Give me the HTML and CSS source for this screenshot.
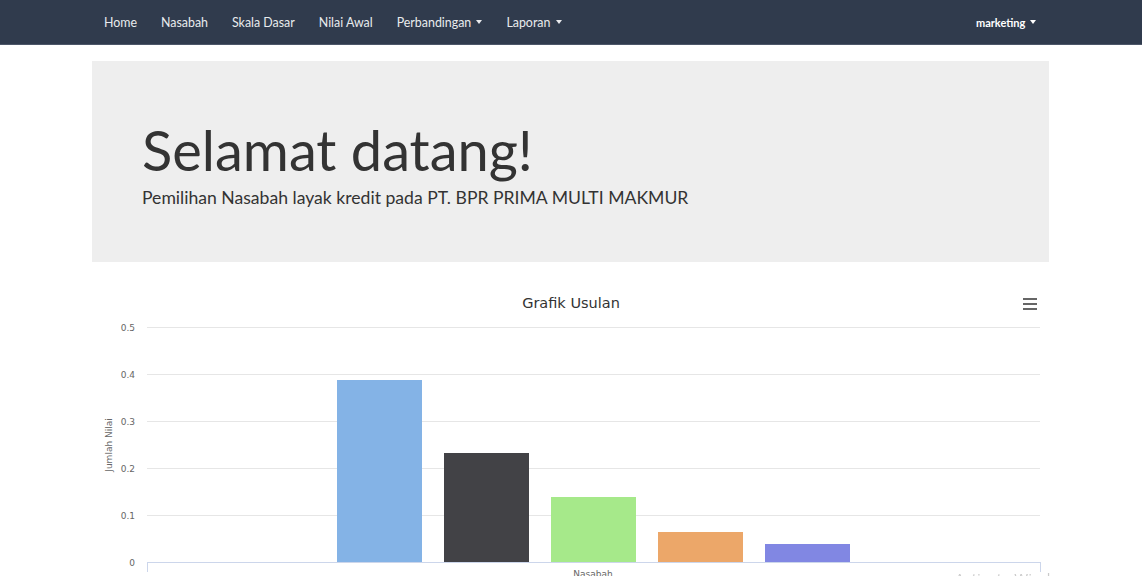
FILE: index.html
```html
<!DOCTYPE html>
<html lang="id">
<head>
<meta charset="utf-8">
<title>Selamat datang</title>
<link rel="stylesheet" href="styles.css">
</head>
<body>
<nav class="navbar">
  <div class="container nav-inner">
    <ul class="nav">
      <li><a href="#">Home</a></li>
      <li><a href="#">Nasabah</a></li>
      <li><a href="#">Skala Dasar</a></li>
      <li><a href="#">Nilai Awal</a></li>
      <li><a href="#">Perbandingan <span class="caret"></span></a></li>
      <li><a href="#">Laporan <span class="caret"></span></a></li>
    </ul>
    <ul class="nav nav-right">
      <li><a href="#" class="bold">marketing <span class="caret"></span></a></li>
    </ul>
  </div>
</nav>

<main class="container">
  <section class="jumbotron">
    <h1>Selamat datang!</h1>
    <p>Pemilihan Nasabah layak kredit pada PT. BPR PRIMA MULTI MAKMUR</p>
  </section>

  <div class="chart">
    <svg width="957" height="300" viewBox="0 0 957 300" xmlns="http://www.w3.org/2000/svg">
      <text x="479" y="26" class="c-title" text-anchor="middle">Grafik Usulan</text>
      <g class="menu-icon">
        <rect x="931" y="16" width="14" height="2"/>
        <rect x="931" y="21" width="14" height="2"/>
        <rect x="931" y="26" width="14" height="2"/>
      </g>
      <g class="grid">
        <line x1="55" y1="45.5" x2="948" y2="45.5"/>
        <line x1="55" y1="92.5" x2="948" y2="92.5"/>
        <line x1="55" y1="139.5" x2="948" y2="139.5"/>
        <line x1="55" y1="186.5" x2="948" y2="186.5"/>
        <line x1="55" y1="233.5" x2="948" y2="233.5"/>
      </g>
      <g class="ylabels" text-anchor="end">
        <text x="43" y="49">0.5</text>
        <text x="43" y="96">0.4</text>
        <text x="43" y="143">0.3</text>
        <text x="43" y="190">0.2</text>
        <text x="43" y="237">0.1</text>
        <text x="43" y="284">0</text>
      </g>
      <text class="ytitle" transform="translate(20 163) rotate(-90)" text-anchor="middle">Jumlah Nilai</text>
      <rect x="245" y="98" width="85" height="182" fill="#84b3e6"/>
      <rect x="352" y="171" width="85" height="109" fill="#424246"/>
      <rect x="459" y="215" width="85" height="65" fill="#a6e98a"/>
      <rect x="566" y="250" width="85" height="30" fill="#eca769"/>
      <rect x="673" y="262" width="85" height="18" fill="#8187e3"/>
      <g class="axis">
        <line x1="55" y1="280.5" x2="948" y2="280.5"/>
        <line x1="55.5" y1="280" x2="55.5" y2="290"/>
        <line x1="948.5" y1="280" x2="948.5" y2="290"/>
      </g>
      <text x="501" y="295" class="xtitle" text-anchor="middle">Nasabah</text>
    </svg>
  </div>
</main>

<div class="watermark">Activate Windows</div>
</body>
</html>
```

FILE: styles.css
```css
* { box-sizing: border-box; }

html, body {
  margin: 0;
  padding: 0;
  background: #ffffff;
  overflow: hidden;
}

body {
  font-family: Lato, "Open Sans", "Liberation Sans", sans-serif;
  color: #333333;
}

.container {
  width: 957px;
  margin-left: calc(50% - 479px);
}

.navbar {
  height: 45px;
  background: #303b4d;
  border-bottom: 1px solid #4d5769;
}

.nav-inner {
  display: flex;
  justify-content: space-between;
  align-items: center;
  height: 44px;
}

.nav {
  list-style: none;
  margin: 0;
  padding: 0;
  display: flex;
}

.nav a {
  display: flex;
  align-items: center;
  height: 44px;
  padding: 0 12px;
  color: #e9ebee;
  text-decoration: none;
  font-size: 12.4px;
  white-space: pre;
}

.nav a.bold {
  font-weight: 700;
  color: #ffffff;
  font-size: 11px;
  padding-right: 13px;
}

.caret {
  display: inline-block;
  width: 0;
  height: 0;
  margin-left: 2px;
  border-top: 4px solid currentColor;
  border-left: 3.5px solid transparent;
  border-right: 3.5px solid transparent;
}

.jumbotron {
  margin-top: 16px;
  height: 201px;
  background: #eeeeee;
  padding: 61px 50px 0;
}

.jumbotron h1 {
  margin: 0;
  font-size: 56px;
  font-weight: 400;
  line-height: 1;
  color: #333333;
}

.jumbotron p {
  margin: 9px 0 0;
  font-size: 17.6px;
  line-height: 1.2;
  color: #333333;
}

.chart {
  margin-top: 20px;
  height: 300px;
}

.chart svg {
  display: block;
  font-family: "DejaVu Sans", "Liberation Sans", sans-serif;
}

.c-title {
  font-size: 14.5px;
  fill: #333333;
}

.menu-icon rect {
  fill: #666666;
}

.grid line {
  stroke: #e6e6e6;
  stroke-width: 1;
}

.ylabels text {
  font-size: 9px;
  fill: #666666;
}

.ytitle {
  font-size: 9px;
  fill: #666666;
}

.axis line {
  stroke: #ccd6eb;
  stroke-width: 1;
}

.xtitle {
  font-size: 9px;
  fill: #666666;
}

.watermark {
  position: fixed;
  left: 955px;
  top: 568px;
  font-family: "Segoe UI", "Open Sans", sans-serif;
  font-size: 15px;
  color: rgba(150, 150, 150, 0.5);
  white-space: nowrap;
}
```
